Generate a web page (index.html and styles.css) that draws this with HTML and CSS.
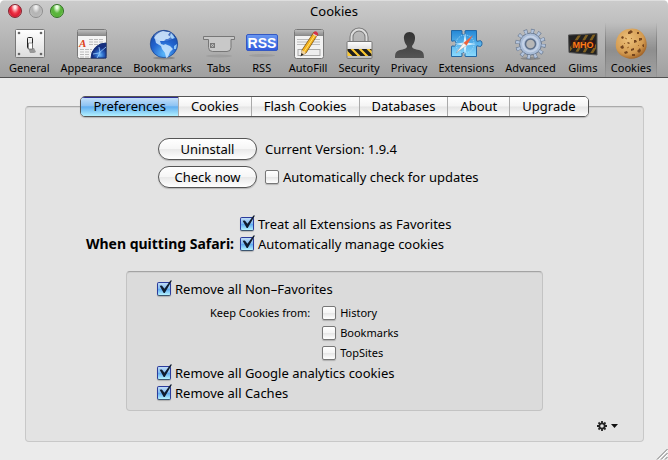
FILE: index.html
```html
<!DOCTYPE html>
<html lang="en">
<head>
<meta charset="utf-8">
<title>Cookies</title>
<link rel="stylesheet" href="styles.css">
</head>
<body>
<div class="window">
  <header class="chrome">
    <div class="titlebar">
      <div class="lights">
        <button class="light light-close" type="button" aria-label="Close"></button>
        <button class="light light-minimize" type="button" aria-label="Minimize"></button>
        <button class="light light-zoom" type="button" aria-label="Zoom"></button>
      </div>
      <h1 class="title">Cookies</h1>
    </div>
    <nav class="toolbar">
      <button class="tool" type="button">
        <svg class="icon" viewBox="0 0 32 32">
          <defs><linearGradient id="plate" x2="0" y2="1"><stop stop-color="#fff"/><stop offset="1" stop-color="#dcdcdc"/></linearGradient></defs>
          <rect x="2.500" y="1.500" width="29" height="28" rx="1" fill="url(#plate)" stroke="#777"/>
          <g fill="#666"><circle cx="6" cy="5" r="1.300"/><circle cx="28" cy="5" r="1.300"/><circle cx="6" cy="26" r="1.300"/><circle cx="28" cy="26" r="1.300"/></g>
          <path d="M15 20h6l2 4-2 1h-4z" fill="#999"/>
          <rect x="14.500" y="9.500" width="5" height="11" rx="1" fill="#bbb" stroke="#222"/>
          <path d="M15 10h4v5h-4z" fill="#eee"/><path d="M15.500 15h4v6h-4z" fill="#fff" stroke="#555" stroke-width=".6"/>
        </svg>
        <span>General</span>
      </button>
      <button class="tool" type="button">
        <svg class="icon" viewBox="0 0 32 32">
          <defs>
            <linearGradient id="bar" x2="0" y2="1"><stop stop-color="#bcbcbc"/><stop offset="1" stop-color="#888"/></linearGradient>
            <radialGradient id="deep" cx=".6" cy=".8"><stop stop-color="#69b7f6"/><stop offset=".5" stop-color="#2a66c4"/><stop offset="1" stop-color="#162f80"/></radialGradient>
          </defs>
          <rect x="2.500" y="1.500" width="29" height="29" rx="2" fill="#f4f4f4" stroke="#777"/>
          <path d="M3 8V3q0-1 1-1h26q1 0 1 1v5z" fill="url(#bar)"/>
          <path d="M14 11.500h15M14 14h15M14 16.500h14M5 21.500h12M5 24h11M5 26.500h10M5 29h10" stroke="#bbb" stroke-dasharray="4 1"/>
          <text class="letter" x="4" y="18.500">A</text>
          <path d="M16 30a15 15 0 0 1 15-15v15z" fill="url(#deep)" stroke="#143079"/>
          <path d="M18 26l6-1 7-6M22 30l3-5-1-6" stroke="#9bd0ff" fill="none" stroke-width=".8"/>
        </svg>
        <span>Appearance</span>
      </button>
      <button class="tool" type="button">
        <svg class="icon" viewBox="0 0 32 32">
          <defs><radialGradient id="globe" cx=".5" cy=".85" r=".9"><stop stop-color="#58b7fa"/><stop offset=".5" stop-color="#2264cf"/><stop offset="1" stop-color="#16439f"/></radialGradient></defs>
          <ellipse cx="17" cy="30" rx="11" ry="1.500" fill="#888"/>
          <circle cx="17" cy="16" r="13.700" fill="url(#globe)" stroke="#1a438c" stroke-width=".7"/>
          <path d="M7 10c2-4 5-6 9-7l4 1 3 0-2 3 3 2-3 2-2 0-2 2-4 0 1 3 3 1 1-1 5 2 3 3-3 3-2 5-2 1-1-5-3-4-1-3-5-3-1-4z" fill="#cde8ff" opacity=".85"/>
          <path d="M24 5l4 5-3 1-2-3zM27 18l3-2-1 5-2 0z" fill="#8fc6f7"/>
          <ellipse cx="17" cy="8" rx="10" ry="5" fill="#fff" opacity=".2"/>
        </svg>
        <span>Bookmarks</span>
      </button>
      <button class="tool" type="button">
        <svg class="icon" viewBox="0 0 32 32">
          <ellipse cx="16" cy="28" rx="13" ry="1.500" fill="#999" opacity=".7"/>
          <path d="M.5 8.500h31v3h-3.500v8q0 4-4 4H9.500q-4 0-4-4v-8h-5z" fill="#c8c8c8" stroke="#777"/>
          <rect x="7.500" y="15.500" width="4" height="4" fill="#bbb" stroke="#777"/><path d="M8 16l3 3M11 16l-3 3" stroke="#777" stroke-width=".7"/>
        </svg>
        <span>Tabs</span>
      </button>
      <button class="tool" type="button">
        <svg class="icon" viewBox="0 0 32 32">
          <defs><linearGradient id="rss" x2="0" y2="1"><stop stop-color="#6b99f1"/><stop offset="1" stop-color="#3159dc"/></linearGradient></defs>
          <ellipse cx="16" cy="27.500" rx="13" ry="1.500" fill="#999" opacity=".7"/>
          <rect x=".5" y="6.500" width="31" height="16" rx="1.500" fill="url(#rss)" stroke="#3459c4"/>
          <text class="rss" x="16" y="19.500">RSS</text>
        </svg>
        <span>RSS</span>
      </button>
      <button class="tool" type="button">
        <svg class="icon" viewBox="0 0 32 32">
          <rect x="2.500" y="1.500" width="29" height="29" rx="2" fill="#f2f2f2" stroke="#777"/>
          <path d="M3 8V3q0-1 1-1h26q1 0 1 1v5z" fill="url(#bar)"/>
          <path d="M5 11.500h23M5 14h23M5 16.500h23" stroke="#bbb"/>
          <rect x="6" y="21.500" width="22" height="6" fill="#eee" stroke="#aaa"/>
          <path d="M22 4l4 2-12 19-4 2 0-5z" fill="#f5b21d" stroke="#7b5010" stroke-width=".8"/>
          <path d="M23 7L12 24" stroke="#ffe371"/>
          <path d="M22 4q3-2 4 2l-1 2-4-2z" fill="#d6304a"/><path d="M21 6l4 2" stroke="#ddd"/>
          <path d="M10 22l4 3-5 3z" fill="#eed09c"/><path d="M9.500 25l2 1.500-3 2z" fill="#222"/>
        </svg>
        <span>AutoFill</span>
      </button>
      <button class="tool" type="button">
        <svg class="icon" viewBox="0 0 32 32">
          <defs>
            <linearGradient id="steel" x2="0" y2="1"><stop stop-color="#fff"/><stop offset="1" stop-color="#bbb"/></linearGradient>
            <clipPath id="band"><rect x="4.500" y="21" width="24" height="7"/></clipPath>
          </defs>
          <path d="M8.500 14V9a7.500 7.500 0 0 1 15 0v5" fill="none" stroke="#777" stroke-width="4"/>
          <path d="M8.500 14V9a7.500 7.500 0 0 1 15 0v5" fill="none" stroke="#ddd" stroke-width="2"/>
          <rect x="4" y="13.500" width="25" height="17" rx="1" fill="url(#steel)" stroke="#777"/>
          <rect x="4.500" y="21" width="24" height="7" fill="#fac72f"/>
          <path d="M3 19l10 10M11 19l10 10M19 19l10 10M27 19l6 6" stroke="#1d1d1d" stroke-width="3.500" clip-path="url(#band)"/>
        </svg>
        <span>Security</span>
      </button>
      <button class="tool" type="button">
        <svg class="icon" viewBox="0 0 32 32">
          <defs><linearGradient id="person" x2="0" y2="1"><stop stop-color="#333"/><stop offset="1" stop-color="#555"/></linearGradient></defs>
          <path d="M16.500 4c4 0 6 3 5.500 7-.3 3-1.500 5-3 7 0 3 3 3 7 4 4 1 5 3 5 8H2c0-5 1-7 5-8 4-1 7-1 7-4-1.500-2-2.700-4-3-7-.5-4 1.500-7 5.500-7z" fill="url(#person)"/>
        </svg>
        <span>Privacy</span>
      </button>
      <button class="tool" type="button">
        <svg class="icon" viewBox="0 0 32 32">
          <defs><linearGradient id="puzzle" x2="0" y2="1"><stop stop-color="#2387d6"/><stop offset="1" stop-color="#8cdcff"/></linearGradient></defs>
          <path d="M1.500 2.500H11q1.500 0 1 1.500-1 2.500 1.500 2.500T15 4q-.5-1.500 1-1.500h10.500V12q0 2 1.500 1.200 4-1.700 4 2.300t-4 2.500q-1.500-1-1.500 1v9.500H16q-1.500 0-1-1.500 1-2.500-1.500-2.500T12 27q.5 1.500-1 1.500H1.500V19q0-1.500 1.500-1 3 1 3-2.500T3 13q-1.500 1-1.500-1z" fill="url(#puzzle)" stroke="#2368a5"/>
          <circle cx="15" cy="16" r="9" fill="none" stroke="#a9ddf9" stroke-dasharray="1 1"/>
          <path d="M15 5l1.500 9.500L26 16l-9.500 1.500L15 27l-1.500-9.500L5 16l8.500-1.500z" fill="#d4f0ff"/>
          <path d="M23 7l-6.500 10.500L13.500 15z" fill="#f0603a"/><path d="M6 25l7.500-10 3 2.500z" fill="#f5f5f5" stroke="#a98a80" stroke-width=".4"/>
        </svg>
        <span>Extensions</span>
      </button>
      <button class="tool" type="button">
        <svg class="icon" viewBox="0 0 32 32">
          <ellipse cx="16.500" cy="30.500" rx="10" ry="1.500" fill="#888"/>
          <circle cx="16.500" cy="16" r="13" fill="none" stroke="#68788f" stroke-width="4.500" stroke-dasharray="3.400 3.407"/>
          <circle cx="16.500" cy="16" r="11" fill="#a9bcd7" stroke="#68788f"/>
          <circle cx="16.500" cy="16" r="12.800" fill="none" stroke="#b3c4dd" stroke-width="3.600" stroke-dasharray="2.400 4.302" stroke-dashoffset="-.4"/>
          <circle cx="16.500" cy="16" r="7.500" fill="none" stroke="#c4d2e7" stroke-width="2"/>
          <circle cx="16.500" cy="16" r="5" fill="#b7b7b7" stroke="#5f7089" stroke-width="1.500"/>
        </svg>
        <span>Advanced</span>
      </button>
      <button class="tool" type="button">
        <svg class="icon" viewBox="0 0 32 32">
          <defs><clipPath id="sign"><path d="M3 8l26-1.500v19L3 23z"/></clipPath></defs>
          <path d="M1.500 7L30 5.500V27L2 24.500z" fill="#222" stroke="#555"/>
          <path d="M2 23L14 5M8 27L21 5M15 28L28 5M23 28l9-15" stroke="#806021" stroke-width="2.500" clip-path="url(#sign)"/>
          <path d="M4 12h24v8H4z" fill="#311" opacity=".65"/>
          <text class="sign" x="16" y="19.500">MHO</text>
        </svg>
        <span>Glims</span>
      </button>
      <button class="tool tool-selected" type="button" aria-current="page">
        <svg class="icon" viewBox="0 0 32 32">
          <defs><radialGradient id="cookie" cx=".4" cy=".35" r=".7"><stop stop-color="#edc17b"/><stop offset=".7" stop-color="#d39a50"/><stop offset="1" stop-color="#9b5d22"/></radialGradient></defs>
          <path d="M13 1c7-2 14 1 17 8 3 7 2 13-3 18-5 4-12 5-18 2C2 26 0 20 1 14 2 7 7 2 13 1z" fill="url(#cookie)"/>
          <g fill="#74451f"><path d="M13 4l3-2 2 2-3 2-2 0zM22 4l2 0 0 2-2 0zM24 10l3 0 0 2-3 1zM6 9l2-1 1 2-2 1zM5 19l3-2 1 3-2 1zM9 24l3-1 1 2-3 1zM16 21l3-1 0 2-3 1zM22 23l3-3 1 3-2 2zM19 12l2 0 1 2-3 1zM27 17l2-1 0 3-1 0zM17 26l3 0 0 2-3 0zM13 14l2 1-1 1-2-1z"/></g>
          <path d="M10 10l2 1M16 10l1 1M10 15l-1 1M23 17l1 1M14 19l-2 1" stroke="#a76c2c"/>
        </svg>
        <span>Cookies</span>
      </button>
    </nav>
  </header>

  <main class="content">
    <nav class="tabs">
      <button class="tab tab-active" type="button">Preferences</button>
      <button class="tab" type="button">Cookies</button>
      <button class="tab" type="button">Flash Cookies</button>
      <button class="tab" type="button">Databases</button>
      <button class="tab" type="button">About</button>
      <button class="tab" type="button">Upgrade</button>
    </nav>
    <section class="panel">
      <div class="install">
        <button class="push" type="button">Uninstall</button>
        <p class="version">Current Version: 1.9.4</p>
        <button class="push" type="button">Check now</button>
        <label class="check"><input type="checkbox">Automatically check for updates</label>
      </div>
      <div class="quit">
        <label class="check quit-option"><input type="checkbox" checked>Treat all Extensions as Favorites</label>
        <strong class="quit-title">When quitting Safari:</strong>
        <label class="check quit-option"><input type="checkbox" checked>Automatically manage cookies</label>
      </div>
      <div class="group">
        <label class="check"><input type="checkbox" checked>Remove all Non–Favorites</label>
        <div class="keep">
          <span class="keep-title">Keep Cookies from:</span>
          <div class="keep-list">
            <label class="check"><input type="checkbox">History</label>
            <label class="check"><input type="checkbox">Bookmarks</label>
            <label class="check"><input type="checkbox">TopSites</label>
          </div>
        </div>
        <label class="check"><input type="checkbox" checked>Remove all Google analytics cookies</label>
        <label class="check"><input type="checkbox" checked>Remove all Caches</label>
      </div>
      <button class="action" type="button" aria-label="Actions">
        <svg class="action-icon" viewBox="0 0 22 10">
          <circle cx="5" cy="5" r="2.700" fill="none" stroke="#222" stroke-width="1.800"/>
          <path d="M5 0v2M5 8v2M0 5h2M8 5h2M1.500 1.500l1.300 1.300M7.200 7.200l1.300 1.300M8.500 1.500L7.200 2.800M2.800 7.200L1.500 8.500" stroke="#222" stroke-width="1.800"/>
          <path d="M14 3h7l-3.500 4z" fill="#111"/>
        </svg>
      </button>
    </section>
  </main>
  <svg class="grip" viewBox="0 0 12 12"><path d="M1 11.500L11.500 1M5 11.500L11.500 5M9 11.500L11.500 9" stroke="#777"/><path d="M2.500 11.500l9-9M6.500 11.500l5-5" stroke="#fff"/></svg>
</div>
</body>
</html>
```
FILE: styles.css
```css
* {
  box-sizing: border-box;
}

body {
  margin: 0;
  background: #fff;
  color: #000;
  font: 13px/20px "Noto Sans", "Open Sans", sans-serif;
}

button {
  margin: 0;
  padding: 0;
  border: 0;
  background: none;
  color: inherit;
  font: inherit;
  white-space: nowrap;
}

.window {
  position: relative;
  display: flex;
  flex-direction: column;
  min-height: 100vh;
  overflow: hidden;
  border-radius: 5px 5px 0 0;
  background: #ebebeb;
}

.chrome {
  border-top: 1px solid #dedede;
  border-bottom: 1px solid #515151;
  background: linear-gradient(#cbcbcb, #a0a0a0);
}

.titlebar {
  display: grid;
  grid-template-columns: 1fr auto 1fr;
  align-items: center;
  height: 22px;
  padding: 0 8px 2px;
}

.lights {
  display: flex;
  gap: 7px;
}

.light {
  width: 14px;
  height: 14px;
  border: 1px solid #777;
  border-radius: 50%;
}

.light-close {
  border-color: #84232f;
  background: radial-gradient(ellipse at 50% 15%, #ffe8e8 0 12%, #f0384a 45%, #d91b32 65%, #ff9a9a);
}

.light-minimize {
  border-color: #8c8c8c;
  background: radial-gradient(ellipse at 50% 15%, #eee 0 12%, #b4b4b4 45%, #b8b8b8 65%, #ddd);
}

.light-zoom {
  border-color: #2e7021;
  background: radial-gradient(ellipse at 50% 15%, #ecffe4 0 12%, #5cb73e 45%, #56b238 65%, #c2fa98);
}

.title {
  margin: 0;
  font-size: 13px;
  font-weight: 400;
}

.toolbar {
  display: flex;
  gap: 1px;
  padding: 0 4px;
}

.tool {
  display: flex;
  flex-direction: column;
  align-items: center;
  min-width: 41px;
  padding: 5px 5px 1px;
  font-size: 11px;
  line-height: 16px;
}

.tool-selected {
  border-right: 1px solid #777;
  border-left: 1px solid #777;
  border-image: linear-gradient(transparent, #777 50%, #999) 1;
  background: linear-gradient(transparent, #00000030 50%, transparent);
}

.icon {
  width: 32px;
  height: 32px;
  overflow: visible;
}

.letter {
  fill: #dd4118;
  font: italic bold 11px "Liberation Serif", serif;
}

.rss {
  fill: #fff;
  font: bold 14px "Liberation Sans", sans-serif;
  text-anchor: middle;
}

.sign {
  fill: #ff7b16;
  font: bold 9px "Liberation Sans", sans-serif;
  text-anchor: middle;
}

.content {
  display: flex;
  flex: 1;
  flex-direction: column;
  padding: 18px 24px 18px 25px;
}

.tabs {
  z-index: 1;
  display: flex;
  align-self: center;
  overflow: hidden;
  margin-bottom: -11px;
  border: 1px solid #555;
  border-radius: 5px;
  box-shadow: 0 1px 1px #0003;
}

.tab {
  padding: 0 12px;
  border-left: 1px solid #aaa;
  background: linear-gradient(#fff, #f4f4f4 48%, #e5e5e5 52%, #fdfdfd);
  line-height: 19px;
}

.tab-active {
  border-left: 0;
  background: linear-gradient(#c9e2f9, #8fc4f3 45%, #62aeef 52%, #b1f0ff);
  box-shadow: inset 0 1px #2b2b93;
}

.panel {
  display: flex;
  flex: 1;
  flex-direction: column;
  padding: 31px 100px 10px;
  border: 1px solid #c8c8c8;
  border-top-color: #aaa;
  border-radius: 4px;
  background: #e3e3e3;
  box-shadow: inset 0 1px #d4d4d4;
}

.install {
  display: grid;
  grid-template-columns: 99px auto;
  gap: 6px 8px;
  align-items: center;
  align-self: start;
  margin-left: 32px;
}

.push {
  height: 22px;
  border: 1px solid #555;
  border-radius: 11px;
  background: linear-gradient(#fff, #f6f6f6 48%, #e9e9e9 52%, #fff);
  box-shadow: 0 1px 1px #0003;
}

.version {
  margin: 0;
}

.check {
  display: flex;
  gap: 4px;
  align-items: center;
  white-space: nowrap;
}

.check input {
  position: relative;
  width: 14px;
  height: 14px;
  margin: 0;
  appearance: none;
  border: 1px solid #777;
  border-radius: 2px;
  background: linear-gradient(#fff, #f5f5f5 48%, #e6e6e6 52%, #fff);
  box-shadow: 0 1px 1px #0003;
}

.check input:checked {
  border-color: #2c3c9c;
  border-bottom-color: #3c5570;
  background: linear-gradient(#bfdcf7, #85bdf2 45%, #5faaf0 52%, #b5f3ff);
}

.check input:checked::after {
  position: absolute;
  top: -3px;
  left: 1px;
  width: 13px;
  height: 13px;
  background: #101d30;
  clip-path: polygon(5% 45%, 22% 42%, 42% 68%, 88% 3%, 100% 3%, 44% 100%, 36% 100%);
  content: "";
}

.quit {
  display: grid;
  grid-template-columns: 108px auto;
  column-gap: 6px;
  margin-top: 26px;
}

.quit-option {
  grid-column: 2;
}

.quit-title {
  grid-row: 2;
  justify-self: end;
  font-size: 14px;
  font-weight: 700;
  white-space: nowrap;
}

.group {
  margin-top: 17px;
  padding: 7px 30px;
  border: 1px solid #c3c3c3;
  border-top-color: #a3a3a3;
  border-radius: 4px;
  background: #dbdbdb;
  box-shadow: inset 0 1px #cfcfcf;
}

.keep {
  display: flex;
  gap: 12px;
  margin: 4px 0 0 53px;
  font-size: 11px;
}

.action {
  align-self: end;
  margin: auto -76px 0 0;
}

.action-icon {
  display: block;
  width: 22px;
  height: 10px;
}

.grip {
  position: absolute;
  right: 0;
  bottom: 0;
  width: 12px;
  height: 12px;
}
```
